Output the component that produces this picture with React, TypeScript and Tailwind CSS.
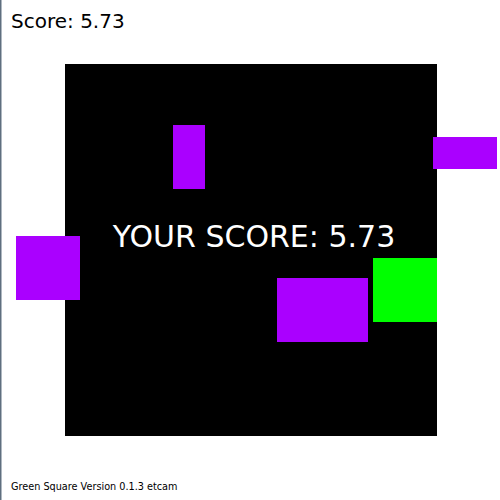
import React from 'react';

// blocks on the play field, page coordinates
const Block: React.FC<{ className: string }> = ({ className }) => (
  <div className={`absolute ${className}`} />
);

const App: React.FC = () => {
  const score = '5.73';

  return (
    <div className="relative w-[500px] h-[500px] bg-white overflow-hidden flex flex-col font-['DejaVu_Sans',sans-serif] text-black shadow-[inset_1px_0_0_#5f6f7f,inset_2px_0_0_#aeb7c0]">
      <div className="pl-[11px] pt-[11px] text-[20px] leading-[20px]">Score: {score}</div>

      <div className="ml-[65px] mt-[33px] w-[372px] h-[372px] bg-black">
        <div className="pt-[158px] pl-[6px] text-center text-white text-[30px] leading-[30px] whitespace-nowrap">
          YOUR SCORE: {score}
        </div>
      </div>

      <div className="pl-[11px] mt-[46px] text-[9.7px] leading-[10px]">Green Square Version 0.1.3 etcam</div>

      <Block className="left-[16px] top-[236px] w-[64px] h-[64px] bg-[#aa00ff]" />
      <Block className="left-[173px] top-[125px] w-[32px] h-[64px] bg-[#aa00ff]" />
      <Block className="left-[433px] top-[137px] w-[64px] h-[32px] bg-[#aa00ff]" />
      <Block className="left-[277px] top-[278px] w-[91px] h-[64px] bg-[#aa00ff]" />
      <Block className="left-[373px] top-[258px] w-[64px] h-[64px] bg-[#00ff00]" />
    </div>
  );
};

export default App;
